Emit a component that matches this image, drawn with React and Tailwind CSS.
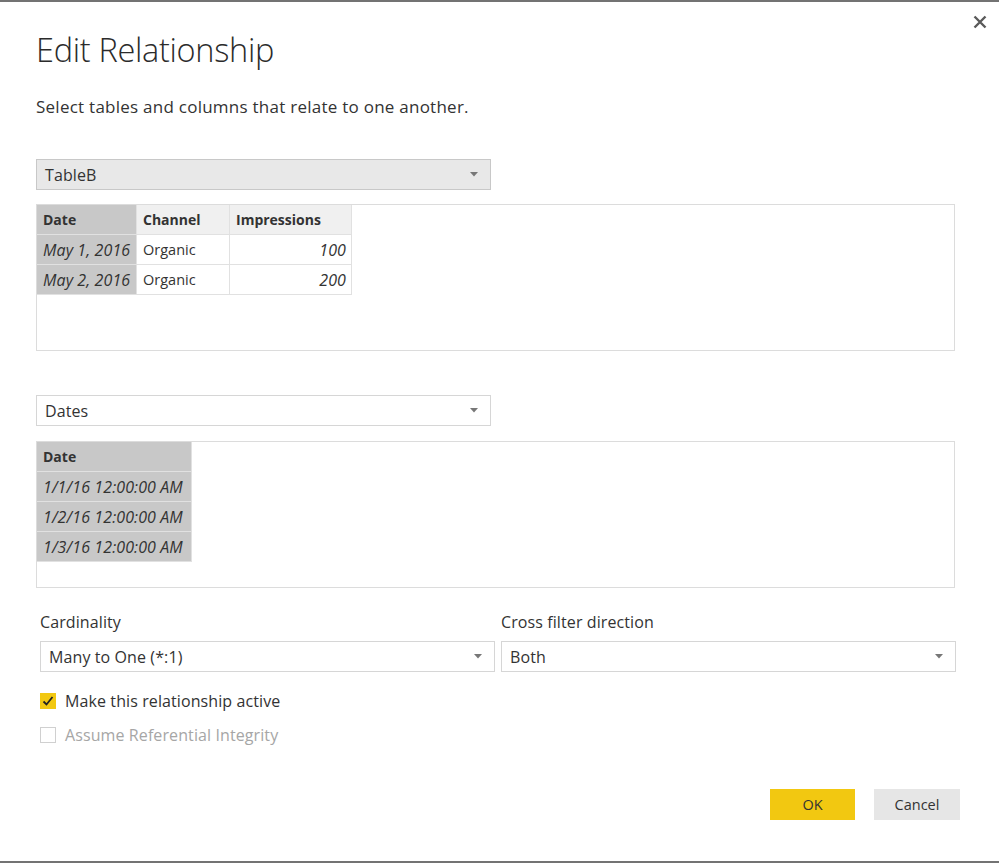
import React from "react";

const font = { fontFamily: '"Open Sans", "Noto Sans", sans-serif' };

function Arrow() {
  return (
    <svg width="8" height="5" viewBox="0 0 8 5" className="shrink-0">
      <path d="M0 0 H8 L4 4.5 Z" fill="#777" />
    </svg>
  );
}

function Select({ value, gray, className = "" }) {
  return (
    <div
      className={`flex items-center justify-between h-[31px] border pl-[8px] pr-[12px] text-[16px] tracking-[0.1px] text-[#333] ${gray ? "bg-[#e8e8e8] border-[#c8c8c8]" : "bg-white border-[#d6d6d6]"} ${className}`}
    >
      <span>{value}</span>
      <Arrow />
    </div>
  );
}

function Cell({ children, className = "" }) {
  return (
    <div className={`h-[30px] flex items-center pl-[6px] pr-[5px] whitespace-nowrap overflow-visible text-[#333] border-r border-b border-[#e1e1e1] ${className}`}>
      {children}
    </div>
  );
}

const B = "bg-[#c8c8c8] font-bold text-[14px]";
const BL = "bg-[#f0f0f0] font-bold text-[14px]";
const I = "italic text-[16px] tracking-[0.1px]";
const R = "text-[14.5px]";

export default function App() {
  return (
    <div className="w-[999px] h-[866px] bg-white" style={font}>
      <div className="relative h-[863px] border-t-2 border-b-2 border-[#737373] bg-white pl-[36px] pr-[44px]">
        <svg className="absolute right-[12px] top-[13px]" width="14" height="14" viewBox="0 0 14 14">
          <path d="M1.5 1.5 L12.5 12.5 M12.5 1.5 L1.5 12.5" stroke="#5a5a5a" strokeWidth="2.4" />
        </svg>

        <h1 className="pt-[26px] text-[32.5px] font-light leading-[44px] text-[#2b2b2b] tracking-[-0.3px]">Edit Relationship</h1>
        <p className="mt-[24px] text-[17px] tracking-[0.25px] leading-[22px] text-[#333]">Select tables and columns that relate to one another.</p>

        <Select value="TableB" gray className="mt-[41px] w-[455px]" />

        <div className="mt-[14px] h-[147px] border border-[#dcdcdc]">
          <div className="grid grid-cols-[100px_93px_122px] w-[315px]">
            <Cell className={B}>Date</Cell>
            <Cell className={BL}>Channel</Cell>
            <Cell className={BL}>Impressions</Cell>
            <Cell className={`bg-[#c8c8c8] ${I}`}>May 1, 2016</Cell>
            <Cell className={R}>Organic</Cell>
            <Cell className={`justify-end ${I}`}>100</Cell>
            <Cell className={`bg-[#c8c8c8] ${I}`}>May 2, 2016</Cell>
            <Cell className={R}>Organic</Cell>
            <Cell className={`justify-end ${I}`}>200</Cell>
          </div>
        </div>

        <Select value="Dates" className="mt-[44px] w-[455px]" />

        <div className="mt-[15px] h-[147px] border border-[#dcdcdc]">
          <div className="w-[155px]">
            <Cell className={B}>Date</Cell>
            <Cell className={`bg-[#c8c8c8] ${I}`}>1/1/16 12:00:00 AM</Cell>
            <Cell className={`bg-[#c8c8c8] ${I}`}>1/2/16 12:00:00 AM</Cell>
            <Cell className={`bg-[#c8c8c8] ${I}`}>1/3/16 12:00:00 AM</Cell>
          </div>
        </div>

        <div className="mt-[23px] pl-[4px] flex gap-[6px]">
          <div className="w-[455px]">
            <div className="text-[16px] tracking-[0.1px] leading-[22px] text-[#333]">Cardinality</div>
            <Select value="Many to One (*:1)" className="mt-[8px] w-[455px]" />
          </div>
          <div className="w-[455px]">
            <div className="text-[16px] tracking-[0.1px] leading-[22px] text-[#333]">Cross filter direction</div>
            <Select value="Both" className="mt-[8px] w-[455px]" />
          </div>
        </div>

        <div className="mt-[18px] pl-[4px] flex items-center gap-[9px]">
          <div className="w-[16px] h-[16px] bg-[#f2c811] flex items-center justify-center">
            <svg width="12" height="12" viewBox="0 0 12 12">
              <path d="M1.5 6.5 L4.5 9.5 L10.5 2" stroke="#222" strokeWidth="1.8" fill="none" />
            </svg>
          </div>
          <span className="text-[16px] tracking-[0.1px] leading-[22px] text-[#333]">Make this relationship active</span>
        </div>
        <div className="mt-[12px] pl-[4px] flex items-center gap-[9px]">
          <div className="w-[16px] h-[16px] border border-[#d0d0d0] bg-white" />
          <span className="text-[16px] tracking-[0.1px] leading-[22px] text-[#a6a6a6]">Assume Referential Integrity</span>
        </div>

        <div className="mt-[43px] flex justify-end gap-[19px] mr-[-5px]">
          <button className="w-[85px] h-[31px] bg-[#f2c811] text-[14.5px] text-[#333]">OK</button>
          <button className="w-[86px] h-[31px] bg-[#e6e6e6] text-[14.5px] text-[#333]">Cancel</button>
        </div>
      </div>
    </div>
  );
}
